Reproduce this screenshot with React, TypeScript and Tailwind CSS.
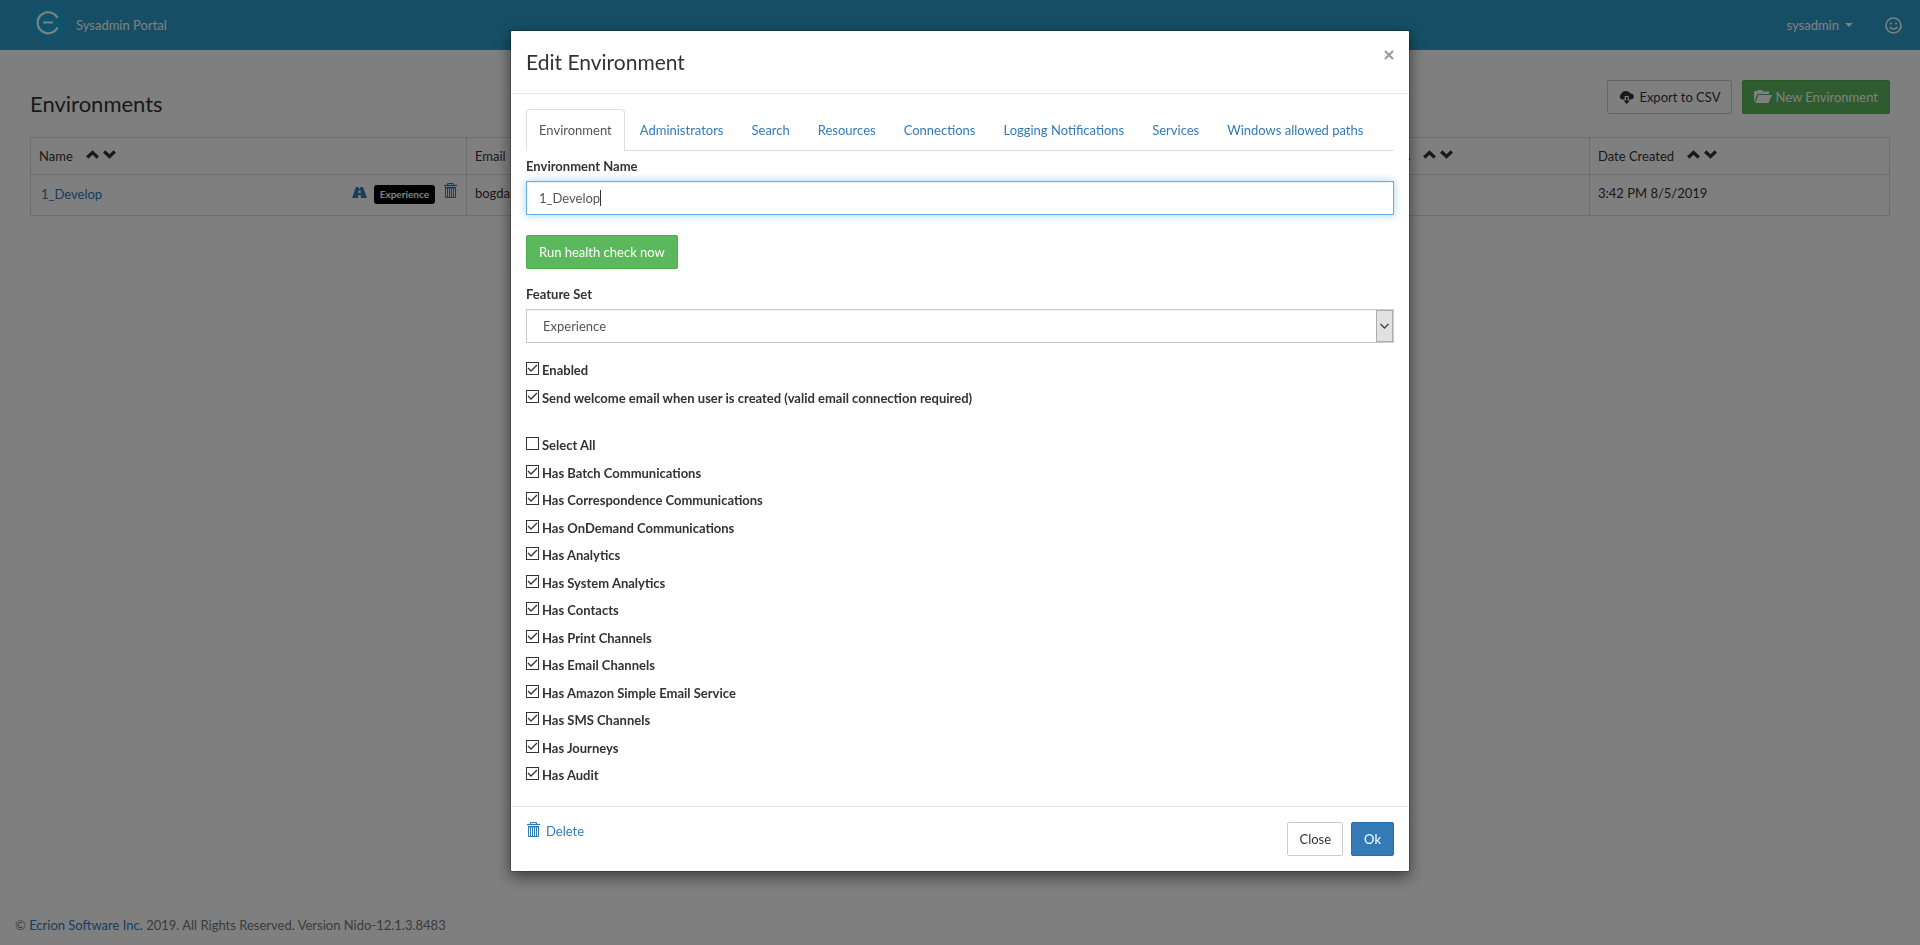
import React, { useState } from "react";

const tabs = ["Administrators", "Search", "Resources", "Connections", "Logging Notifications", "Services", "Windows allowed paths"];

const features = [
  "Has Batch Communications",
  "Has Correspondence Communications",
  "Has OnDemand Communications",
  "Has Analytics",
  "Has System Analytics",
  "Has Contacts",
  "Has Print Channels",
  "Has Email Channels",
  "Has Amazon Simple Email Service",
  "Has SMS Channels",
  "Has Journeys",
  "Has Audit",
];

function TrashIcon() {
  return (
    <svg width="13" height="15" viewBox="0 0 13 15" fill="none" stroke="currentColor" aria-hidden="true">
      <path d="M3.500 2V.5h6V2" />
      <path d="M0 2.500h13" strokeWidth="1.300" />
      <path d="M1.500 4v10.500h10V4" />
      <path d="M1 4.700h11" strokeWidth="1.500" />
      <path d="M3.500 4v10M5.500 4v10M7.500 4v10M9.500 4v10" />
    </svg>
  );
}

function RoadIcon() {
  return (
    <svg width="15" height="11" viewBox="0 0 15 11" fill="currentColor" aria-hidden="true">
      <path d="M4 0h2.800v2h1.400V0H11l4 11H8.800V8H6.200v3H0zM6.500 3.500L6.300 6h2.400L8.500 3.500z" fillRule="evenodd" />
    </svg>
  );
}

function SortIcons() {
  return (
    <span className="mb-[3px] inline-flex items-center gap-1 text-[#333]">
      <svg width="13" height="9" viewBox="0 0 13 9" fill="none" stroke="currentColor" strokeWidth="3.200" aria-hidden="true">
        <path d="M1.200 7.500L6.500 2.500l5.300 5" />
      </svg>
      <svg width="13" height="9" viewBox="0 0 13 9" fill="none" stroke="currentColor" strokeWidth="3.200" aria-hidden="true">
        <path d="M1.200 1.500L6.500 6.500l5.300-5" />
      </svg>
    </span>
  );
}

function Check({ label, checked = true }: { label: string; checked?: boolean }) {
  const [on, setOn] = useState(checked);
  return (
    <label className="flex items-start gap-[3px] leading-4 font-bold">
      <span className="grid shrink-0">
        <input
          type="checkbox"
          checked={on}
          onChange={() => setOn(!on)}
          className="col-start-1 row-start-1 size-[13px] appearance-none border border-[#333] bg-white"
        />
        {on && (
          <svg className="pointer-events-none col-start-1 row-start-1" width="13" height="13" viewBox="0 0 13 13" fill="none" stroke="#333" strokeWidth="1.300" aria-hidden="true">
            <path d="M2 6l3 3L11 3" />
          </svg>
        )}
      </span>
      {label}
    </label>
  );
}

export default function App() {
  const [name, setName] = useState("1_Develop");
  return (
    <div className="flex min-h-screen flex-col bg-white font-['Lato',sans-serif] text-[13px] leading-5 text-[#333]">
      <nav className="flex h-[50px] items-center justify-between bg-[#2c9fca] pr-[18px] pl-8 text-white">
        <div className="flex items-center gap-3">
          <svg width="32" height="34" viewBox="0 0 32 34" aria-hidden="true">
            <circle cx="16" cy="15" r="16" fill="#1ba7d8" />
            <path d="M25.500 10A10.500 10.500 0 1 0 25.500 19.500" fill="none" stroke="#fff" strokeWidth="2.200" />
            <path d="M11 14.500h10" stroke="#fff" strokeWidth="2" />
          </svg>
          <a href="#">Sysadmin Portal</a>
        </div>
        <div className="flex items-center gap-8">
          <button className="flex items-center gap-[6px]">
            sysadmin
            <svg width="8" height="4" viewBox="0 0 8 4" fill="currentColor" aria-hidden="true"><path d="M0 0h8L4 4z" /></svg>
          </button>
          <svg width="17" height="17" viewBox="0 0 17 17" fill="none" stroke="currentColor" strokeWidth="1.600" aria-hidden="true">
            <circle cx="8.500" cy="8.500" r="7.500" />
            <path d="M5 6.500h2M10 6.500h2M4.500 10q4 4 8 0" />
          </svg>
        </div>
      </nav>

      <main className="flex-1 px-[30px] pt-[30px]">
        <div className="flex items-start justify-between">
          <h1 className="mt-[10px] text-[22px] leading-7">Environments</h1>
          <div className="flex gap-[10px]">
            <button className="flex h-[34px] items-center gap-[5px] rounded-xs border border-[#ccc] bg-white px-[11px]">
              <svg width="15" height="14" viewBox="0 0 15 14" fill="currentColor" aria-hidden="true">
                <path d="M3 9.500A3 3 0 0 1 2.200 4 5 4.500 0 0 1 11.500 3.500 3 3 0 0 1 12 9.500H9.700V6H5.700v3.500zM7 7h1.500v3.500H11L7.700 14 4.500 10.500H7z" />
              </svg>
              Export to CSV
            </button>
            <button className="flex h-[34px] items-center gap-[3px] rounded-xs border border-[#4cae4c] bg-[#5cb85c] px-[11px] text-white">
              <svg width="18" height="14" viewBox="0 0 18 14" fill="currentColor" aria-hidden="true">
                <path d="M0 12V2l1-1h2l1-1h4l1 1.500h6V4H3.500zM4.500 5H18l-3.500 8H1z" />
              </svg>
              New Environment
            </button>
          </div>
        </div>

        <table className="mt-[19px] w-full table-fixed border-collapse">
          <colgroup>
            <col className="w-[436px]" />
            <col />
            <col className="w-[223px]" />
            <col className="w-[300px]" />
          </colgroup>
          <thead>
            <tr className="h-[37px] text-left">
              {["Name", "Email", "Status", "Date Created"].map((h) => (
                <th key={h} className="border border-[#ddd] px-2 py-0 font-normal">
                  <span className="flex items-center gap-[13px]">{h}<SortIcons /></span>
                </th>
              ))}
            </tr>
          </thead>
          <tbody>
            <tr className="h-[41px]">
              <td className="border border-[#ddd] px-[9px] pb-[2px]">
                <div className="flex items-center text-[#337ab7]">
                  <a href="#" className="flex-1 pl-px">1_Develop</a>
                  <span className="mb-1"><RoadIcon /></span>
                  <span className="mr-[9px] ml-[7px] rounded-[3px] bg-black px-[6px] text-[10px] leading-[19px] font-bold text-white">Experience</span>
                  <span className="mb-2"><TrashIcon /></span>
                </div>
              </td>
              <td className="border border-[#ddd] px-2 pb-[5px]">bogdan</td>
              <td className="border border-[#ddd] px-2" />
              <td className="border border-[#ddd] px-2 pb-[5px]">3:42 PM 8/5/2019</td>
            </tr>
          </tbody>
        </table>
      </main>

      <footer className="px-[15px] pb-[10px] text-[#777]">
        © <a href="#" className="text-[#337ab7]">Ecrion Software Inc.</a> 2019. All Rights Reserved. Version Nido-12.1.3.8483
      </footer>

      <div className="fixed inset-0 overflow-auto bg-black/50 py-[30px]">
        <div role="dialog" aria-label="Edit Environment" className="mx-auto max-w-[900px] rounded-xs border border-black/20 bg-white bg-clip-padding shadow-[0_5px_15px_rgba(0,0,0,0.5)]">
          <header className="flex items-start justify-between border-b border-[#e5e5e5] px-[15px] py-[15px]">
            <h2 className="text-[21px] leading-8">Edit Environment</h2>
            <button aria-label="Close dialog" className="text-[#999]">
              <svg width="10" height="18" viewBox="0 0 10 18" fill="none" stroke="currentColor" strokeWidth="2" aria-hidden="true">
                <path d="M1 5l8 8M9 5l-8 8" />
              </svg>
            </button>
          </header>

          <div className="px-[15px] pt-[15px] pb-[11px]">
            <div className="flex flex-wrap border-b border-[#ddd]">
              <a href="#" className="-mb-px rounded-t border border-b-0 border-[#ddd] bg-white px-3 pt-[10px] pb-[11px] text-[#555]">Environment</a>
              {tabs.map((t) => (
                <a key={t} href="#" className="ml-[2px] px-[13px] pt-[11px] pb-[10px] text-[#337ab7]">{t}</a>
              ))}
            </div>

            <label htmlFor="env-name" className="mt-[5px] mb-[5px] block font-bold">Environment Name</label>
            <div className="grid items-center">
              <input
                id="env-name"
                value={name}
                onChange={(e) => setName(e.target.value)}
                autoFocus
                className="col-start-1 row-start-1 block h-[34px] w-full border border-[#66afe9] px-3 text-[#555] caret-transparent shadow-[inset_0_1px_1px_rgba(0,0,0,0.075),0_0_8px_rgba(102,175,233,0.6)] outline-none"
              />
              <span className="pointer-events-none col-start-1 row-start-1 ml-[74px] h-4 w-px bg-[#333]" />
            </div>

            <button className="mt-5 block h-[34px] rounded-xs border border-[#4cae4c] bg-[#5cb85c] px-3 text-white">Run health check now</button>

            <label htmlFor="feature-set" className="mt-[15px] mb-[5px] block font-bold">Feature Set</label>
            <div className="grid grid-cols-[1fr_17px_1px]">
              <select id="feature-set" className="col-span-3 col-start-1 row-start-1 h-[34px] w-full appearance-none border border-[#ccc] bg-white px-4 text-[#555] shadow-[inset_0_1px_1px_rgba(0,0,0,0.075)]">
                <option>Experience</option>
              </select>
              <span className="pointer-events-none col-start-2 row-start-1 my-px flex items-center justify-center border border-[#adadad] bg-[#e1e1e1]">
                <svg width="9" height="6" viewBox="0 0 9 6" fill="none" stroke="#444" strokeWidth="1.400" aria-hidden="true"><path d="M.5 1l4 4 4-4" /></svg>
              </span>
            </div>

            <div className="mt-[19px] grid auto-rows-[28px]">
              <Check label="Enabled" />
              <Check label="Send welcome email when user is created (valid email connection required)" />
            </div>
            <div className="mt-[19px] grid auto-rows-[28px_27px]">
              <Check label="Select All" checked={false} />
              {features.map((f) => (
                <Check key={f} label={f} />
              ))}
            </div>
          </div>

          <footer className="flex items-start justify-between border-t border-[#e5e5e5] p-[15px]">
            <button className="flex items-center gap-[6px] pl-px leading-[18px] text-[#337ab7]"><span className="mb-[3px]"><TrashIcon /></span>Delete</button>
            <div className="flex gap-2">
              <button className="h-[34px] rounded-xs border border-[#ccc] bg-white px-[11px]">Close</button>
              <button className="h-[34px] rounded-xs border border-[#2e6da4] bg-[#337ab7] px-3 text-white">Ok</button>
            </div>
          </footer>
        </div>
      </div>
    </div>
  );
}
